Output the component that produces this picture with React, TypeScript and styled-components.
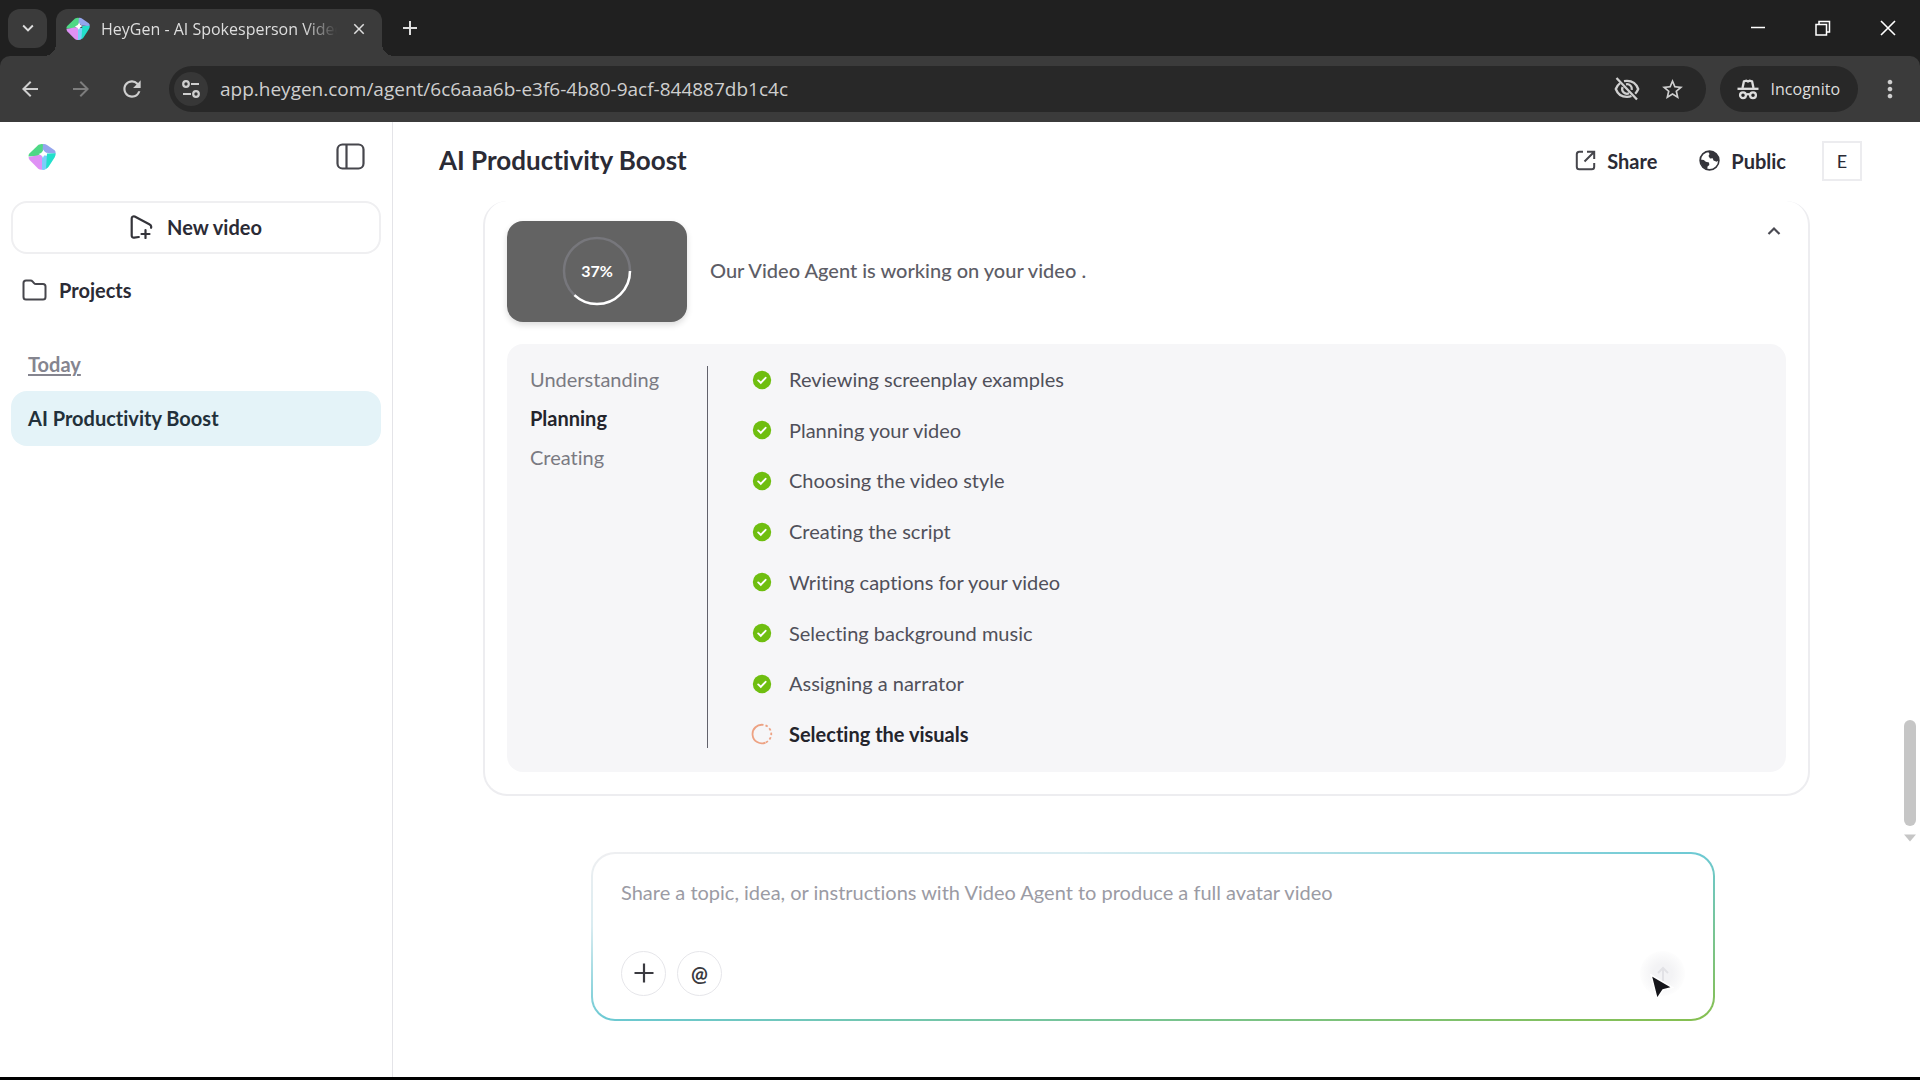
import React from 'react';
import styled, { createGlobalStyle } from 'styled-components';
import {
  MdArrowBack,
  MdArrowForward,
  MdRefresh,
  MdStarBorder,
  MdMoreVert,
  MdKeyboardArrowDown,
  MdClose,
  MdAdd,
} from 'react-icons/md';

const GlobalStyle = createGlobalStyle`
  * { box-sizing: border-box; }
  body {
    margin: 0;
    background: #000;
    font-family: Lato, "Open Sans", sans-serif;
    font-size: 20px;
    line-height: 28px;
    color: #2b2b35;
    font-variant-ligatures: none;
  }
  button, input, textarea { font: inherit; color: inherit; font-variant-ligatures: none; }
  button { border: 0; background: none; padding: 0; }
  h1, h2, p, ul, ol { margin: 0; padding: 0; list-style: none; }
  svg { display: block; flex: none; }
`;

const Window = styled.div`
  height: 100vh;
  display: flex;
  flex-direction: column;
  border-bottom: 3px solid #000;
  background: #fff;
`;

/* ---------- browser frame ---------- */

const TabStrip = styled.div`
  display: flex;
  align-items: center;
  height: 56px;
  flex: none;
  padding-left: 8px;
  background: #202020;
  color: #dedede;
  font-family: "Open Sans", sans-serif;
  font-size: 16px;
`;

const TabSearch = styled.button`
  width: 39px;
  height: 39px;
  display: grid;
  place-items: center;
  border-radius: 12px;
  background: #3b3b3b;
`;

const Tab = styled.div`
  position: relative;
  align-self: flex-end;
  display: flex;
  align-items: center;
  width: 326px;
  height: 47px;
  margin-left: 9px;
  padding: 0 14px 8px 10px;
  border-radius: 12px 12px 0 0;
  background: #3b3b3b;

  &::before,
  &::after {
    content: '';
    position: absolute;
    bottom: 0;
    width: 12px;
    height: 12px;
  }
  &::before {
    right: 100%;
    background: radial-gradient(circle at 0 0, transparent 12px, #3b3b3b 12px);
  }
  &::after {
    left: 100%;
    background: radial-gradient(circle at 100% 0, transparent 12px, #3b3b3b 12px);
  }
`;

const TabTitle = styled.span`
  flex: 1;
  margin: 0 13px 0 11px;
  overflow: hidden;
  white-space: nowrap;
  mask-image: linear-gradient(to right, #000 86%, transparent);
`;

const IconButton = styled.button<{ $size?: number }>`
  width: ${(p) => p.$size ?? 40}px;
  height: ${(p) => p.$size ?? 40}px;
  flex: none;
  display: grid;
  place-items: center;
`;

const NewTab = styled(IconButton)`
  margin-left: 8px;
`;

const WindowControls = styled.div`
  display: flex;
  gap: 25px;
  margin-left: auto;
  padding-right: 12px;
`;

const ToolbarBack = styled.div`
  flex: none;
  background: #202020;
`;

const Toolbar = styled.div`
  display: flex;
  align-items: center;
  height: 66px;
  padding: 0 10px;
  background: #3b3b3b;
  border-radius: 10px 10px 0 0;
  color: #cfcfcf;
  font-family: "Open Sans", sans-serif;
`;

const NavButtons = styled.div`
  display: flex;
  gap: 11px;
`;

const NavButton = styled(IconButton)<{ $dim?: boolean }>`
  color: ${(p) => (p.$dim ? '#7d7d7d' : '#cfcfcf')};
`;

const Omnibox = styled.div`
  flex: 1;
  display: flex;
  align-items: center;
  height: 46px;
  margin: 0 14px 0 17px;
  padding: 0 13px 0 5px;
  border-radius: 23px;
  background: #282828;
`;

const SiteInfo = styled(IconButton)`
  border-radius: 50%;
  background: #373737;
`;

const Address = styled.input`
  flex: 1;
  min-width: 0;
  height: 32px;
  margin-left: 12px;
  padding: 0;
  border: 0;
  outline: 0;
  background: none;
  font-size: 19px;
`;

const OmniboxActions = styled.div`
  display: flex;
  gap: 6px;
`;

const IncognitoChip = styled.div`
  display: flex;
  align-items: center;
  gap: 12px;
  height: 46px;
  padding: 0 18px 0 17px;
  border-radius: 23px;
  background: #282828;
  color: #dedede;
  font-size: 16px;
`;

const MenuButton = styled(IconButton)`
  margin-left: 12px;
`;

/* ---------- application ---------- */

const AppArea = styled.div`
  flex: 1;
  min-height: 0;
  display: flex;
`;

const Sidebar = styled.aside`
  width: 393px;
  flex: none;
  padding: 0 11px;
  border-right: 1px solid #e4e4e8;
`;

const SidebarTop = styled.div`
  display: flex;
  align-items: center;
  justify-content: space-between;
  height: 79px;
  padding: 0 16px 10px 17px;
`;

const NewVideo = styled.button`
  display: flex;
  align-items: center;
  justify-content: center;
  gap: 14px;
  width: 100%;
  height: 53px;
  padding-bottom: 2px;
  border: 2px solid #efeff1;
  border-radius: 16px;
  font-weight: 700;
`;

const NavLink = styled.a`
  display: flex;
  align-items: center;
  gap: 12px;
  height: 44px;
  margin-top: 14px;
  padding-left: 11px;
  color: inherit;
  font-weight: 700;
  text-decoration: none;
`;

const GroupLabel = styled.h2`
  margin: 38px 0 13px;
  padding-left: 17px;
  color: #85858f;
  font-size: 20px;
  font-weight: 700;
  text-decoration: underline;
  text-decoration-thickness: 2px;
  text-underline-offset: 2px;
`;

const SessionLink = styled.a`
  display: flex;
  align-items: center;
  height: 55px;
  padding: 0 17px 2px;
  border-radius: 16px;
  background: #e4f3f8;
  color: #22303a;
  font-weight: 700;
  text-decoration: none;
`;

const Main = styled.main`
  flex: 1;
  min-width: 0;
  display: flex;
  flex-direction: column;
`;

const Header = styled.header`
  display: flex;
  align-items: center;
  height: 79px;
  flex: none;
  padding: 0 58px 2px 46px;
`;

const Title = styled.h1`
  flex: 1;
  font-size: 26px;
  font-weight: 700;
  line-height: 34px;
  padding-bottom: 2px;
`;

const HeaderButton = styled.button`
  display: flex;
  align-items: center;
  gap: 11px;
  margin-right: 42px;
  font-weight: 700;
`;

const Avatar = styled.button`
  width: 40px;
  height: 40px;
  margin-left: -6px;
  border: 2px solid #ececef;
  font-size: 18px;
`;

const ScrollArea = styled.div`
  flex: 1;
  min-height: 0;
  display: flex;
  overflow: hidden;
`;

const Thread = styled.div`
  flex: 1;
  padding: 0 90px;
`;

const ScrollTrack = styled.div`
  display: flex;
  flex-direction: column;
  justify-content: flex-end;
  align-items: center;
  gap: 8px;
  width: 12px;
  margin: 0 4px;
  padding-bottom: 4px;
`;

const ScrollThumb = styled.div`
  width: 12px;
  height: 106px;
  border-radius: 6px;
  background: #c6c6c6;
`;

const ProgressCard = styled.section`
  padding: 20px 22px 22px;
  border: 2px solid #ededf0;
  border-top: 0;
  border-radius: 24px;
`;

const CardTop = styled.div`
  display: flex;
  gap: 23px;
`;

const Thumbnail = styled.div`
  display: grid;
  place-items: center;
  width: 180px;
  height: 101px;
  padding-bottom: 2px;
  border-radius: 16px;
  background: #636363;
  box-shadow: 0 3px 6px rgba(0, 0, 0, 0.14);
  color: #fff;
  font-size: 16px;
  font-weight: 700;

  > * {
    grid-area: 1 / 1;
  }
`;

const Status = styled.p`
  flex: 1;
  align-self: center;
  padding-bottom: 4px;
  color: #5d5d66;
  font-weight: 500;
`;

const CollapseButton = styled(IconButton)`
  margin-top: -2px;
  color: #4a4a52;
`;

const Panel = styled.div`
  display: flex;
  min-height: 428px;
  margin-top: 22px;
  padding: 22px 23px 24px;
  border-radius: 16px;
  background: #f6f6f8;
  line-height: 27px;
`;

const Phases = styled.ol`
  display: flex;
  flex-direction: column;
  gap: 12px;
  width: 178px;
  border-right: 1px solid #62626c;
`;

const Phase = styled.li<{ $current?: boolean }>`
  color: ${(p) => (p.$current ? '#24242c' : '#7a7a82')};
  font-weight: ${(p) => (p.$current ? 700 : 400)};
`;

const Tasks = styled.ul`
  display: flex;
  flex-direction: column;
  justify-content: space-between;
  padding-left: 43px;
`;

const Task = styled.li<{ $current?: boolean }>`
  display: flex;
  align-items: center;
  gap: 16px;
  color: ${(p) => (p.$current ? '#24242c' : '#50505a')};
  font-weight: ${(p) => (p.$current ? 700 : 400)};
`;

const Footer = styled.footer`
  flex: none;
  padding: 6px 205px 56px 198px;
`;

const Composer = styled.form`
  display: flex;
  flex-direction: column;
  padding: 24px 28px 23px;
  border: 2px solid transparent;
  border-radius: 24px;
  background:
    linear-gradient(#fff, #fff) padding-box,
    linear-gradient(to bottom right, #efeff1 0%, #d9ecf1 22%, #6cc9d3 50%, #86bf4e 100%) border-box;
`;

const Prompt = styled.textarea`
  width: 100%;
  height: 73px;
  padding: 0;
  border: 0;
  outline: 0;
  resize: none;
  background: none;

  &::placeholder {
    color: #9b9ba4;
    opacity: 1;
  }
`;

const ComposerActions = styled.div`
  display: flex;
  gap: 11px;
`;

const RoundButton = styled.button`
  display: grid;
  place-items: center;
  width: 45px;
  height: 45px;
  padding-bottom: 1px;
  border: 1px solid #e6e6ea;
  border-radius: 50%;
  color: #3a3a40;
  font-weight: 700;
`;

const SendButton = styled.button`
  position: relative;
  display: grid;
  place-items: center;
  width: 45px;
  height: 45px;
  margin-left: auto;
  border-radius: 50%;
  background: radial-gradient(circle, #f3f3f5 30%, #fdfdfd 70%);
`;

const Pointer = styled.svg`
  position: absolute;
  left: 9px;
  top: 22px;
`;

/* ---------- drawings ---------- */

const Logo = ({ size }: { size: number }) => (
  <svg width={size} height={size} viewBox="0 0 28 28" aria-hidden="true">
    <path d="M10.5 1.8 Q14 .2 16.5 1.6 L14.5 9.6 L9.5 13 L.6 13.6 Q.2 12 1.4 10.6 Z" fill="#4fd886" />
    <path d="M15 1 Q17.5 .8 19 2 L26.6 7.2 Q28 8.4 27.6 10.8 L18.2 9.8 L14.6 7 Z" fill="#94a5ee" />
    <path d="M.6 14 L14 11.5 L14 26.8 Q11.8 27 10 25.4 L1.6 17 Q.5 15.6 .6 14 Z" fill="#df91f5" />
    <path d="M14 12 L20.5 13 L18.5 25.4 Q16.4 27.4 14 26.8 Z" fill="#7ccdfa" />
    <path d="M19 10.4 L27.6 10.2 Q28 12.4 26.6 14.4 L20.4 24 Q19.6 25.2 18 25.8 Z" fill="#23dfcb" />
    <path d="M15.4 6.4 Q16 9.8 19.4 10.6 Q16 11.4 15 15 Q14 11.8 10.4 11 Q14.400 10 15.4 6.4Z" fill="#fff" />
  </svg>
);

const TuneIcon = () => (
  <svg width="20" height="20" viewBox="0 0 20 20" fill="none" stroke="currentColor" strokeWidth="2.2">
    <circle cx="5" cy="5" r="2.8" />
    <path d="M10 5h8M2 15h8" />
    <circle cx="15" cy="15" r="2.8" />
  </svg>
);

const EyeOffIcon = () => (
  <svg width="28" height="28" viewBox="0 0 28 28" fill="none" stroke="currentColor" strokeWidth="2.3">
    <path d="M11 6.2c1-.2 2-.3 3-.3 5.2 0 9.4 3 11.2 8.1-.7 1.8-1.7 3.4-3 4.7M18.5 21c-1.4.6-2.9.9-4.5.9-5.2 0-9.4-3-11.2-7.9C3.7 11.5 5.2 9.5 7.100 8.100" />
    <path d="M13 9.3a4.8 4.8 0 0 1 5.8 5.6M16 18.3a4.8 4.8 0 0 1-6.4-6.3M3.5 3l20.5 21.5" />
  </svg>
);

const IncognitoIcon = () => (
  <svg width="22" height="21" viewBox="0 0 22 21" fill="none" stroke="currentColor" strokeWidth="2.3">
    <path d="M5.500 9L6.900 2.400 9.300 1.700l1.700.8 1.700-.8 2.400.7 1.400 6.600" />
    <path d="M.5 9.800h21" />
    <circle cx="6" cy="16.200" r="2.900" />
    <circle cx="16" cy="16.200" r="2.900" />
    <path d="M8.700 15.800q2.300-1.200 4.600 0" />
  </svg>
);

const MinimizeIcon = () => (
  <svg width="16" height="16" viewBox="0 0 16 16" stroke="#fff" strokeWidth="1.5">
    <path d="M1 7.5h14" />
  </svg>
);

const RestoreIcon = () => (
  <svg width="16" height="16" viewBox="0 0 16 16" fill="none" stroke="#fff" strokeWidth="1.5">
    <path d="M1 4.5h10.500V15H1zM4 4.500V1.500h10.500V12h-3" />
  </svg>
);

const CloseIcon = () => (
  <svg width="16" height="16" viewBox="0 0 16 16" stroke="#fff" strokeWidth="1.6">
    <path d="M1 1l14 14M15 1L1 15" />
  </svg>
);

const SidebarIcon = () => (
  <svg width="29" height="27" viewBox="0 0 29 27" fill="none" stroke="#46464c" strokeWidth="2.2">
    <rect x="1.5" y="1.5" width="26" height="24" rx="5" />
    <path d="M10.5 1.5v24" />
  </svg>
);

const NewVideoIcon = () => (
  <svg width="23" height="24" viewBox="0 0 23 24" fill="none" stroke="#34343a" strokeWidth="2.2" strokeLinecap="round" strokeLinejoin="round">
    <path d="M8.8 22 4.200 22.600C2.600 22.900 1.700 22 1.700 20.600V3.400c0-1.600 1.600-2.500 3-1.800l14.600 7.600c1.600.9 2.200 2.200 1.800 3.600" />
    <path d="M15.500 15v8M11.500 19h8" />
  </svg>
);

const FolderIcon = () => (
  <svg width="25" height="22" viewBox="0 0 25 22" fill="none" stroke="#46464c" strokeWidth="2" strokeLinejoin="round">
    <path d="M1.500 4c0-1.500 1-2.500 2.500-2.500h4.500c1 0 1.600.4 2.200 1.100l1.300 1.500c.5.600 1 .9 1.900.9H21c1.500 0 2.500 1 2.500 2.500V18c0 1.500-1 2.500-2.500 2.500H4c-1.500 0-2.500-1-2.500-2.500z" />
  </svg>
);

const ShareIcon = () => (
  <svg width="21" height="21" viewBox="0 0 21 21" fill="none" stroke="#46464c" strokeWidth="2">
    <path d="M8 1.800H4.300c-1.500 0-2.500 1-2.500 2.500v12.400c0 1.500 1 2.500 2.500 2.500h12.400c1.500 0 2.500-1 2.500-2.500V13" />
    <path d="M12 1.800h7.200V9M19 2L9.500 11.500" />
  </svg>
);

const GlobeIcon = () => (
  <svg width="21" height="21" viewBox="0 0 21 21" aria-hidden="true">
    <circle cx="10.5" cy="10.5" r="9.4" fill="#fff" stroke="#34343a" strokeWidth="1.6" />
    <path d="M9 1.600C12 1 15 1.600 17.500 4.500c1.600 1.900 2.100 4 2 6l-1.800 1.300-3.200-1.300-.8-2.300-2.700.2L9.500 6 10.500 4z" fill="#34343a" />
    <path d="M1.300 9.500l3.500.4 2 1.800 3.200.8.300 2.400-1.800 1.500-.2 2.800C4.500 18.300 1.300 14.600 1.300 9.500z" fill="#34343a" />
  </svg>
);

const ChevronUp = () => (
  <svg width="14" height="10" viewBox="0 0 14 10" fill="none" stroke="currentColor" strokeWidth="2.2">
    <path d="M1.500 8L7 2.500 12.500 8" />
  </svg>
);

const PlusIcon = () => (
  <svg width="20" height="20" viewBox="0 0 20 20" stroke="currentColor" strokeWidth="2.2">
    <path d="M10 .5v19M.5 10h19" />
  </svg>
);

const ProgressRing = ({ value }: { value: number }) => (
  <svg width="70" height="70" viewBox="0 0 70 70" fill="none" aria-hidden="true">
    <circle cx="35" cy="35" r="33" stroke="#77777c" strokeWidth="2.5" />
    <circle cx="35" cy="35" r="33" stroke="#fff" strokeWidth="2.5" pathLength={100} strokeDasharray={`${value} 100`} />
  </svg>
);

const DoneIcon = () => (
  <svg width="22" height="22" viewBox="0 0 22 22" fill="none">
    <circle cx="11" cy="11" r="9.2" fill="#6fbe10" />
    <path d="M7.200 11.400l2.600 2.400 4.800-5" stroke="#fff" strokeWidth="1.9" strokeLinecap="round" />
  </svg>
);

const BusyIcon = () => (
  <svg width="22" height="22" viewBox="0 0 22 22" fill="none" stroke="#eda283" strokeWidth="1.8">
    <path d="M14.500 19.600A9.300 9.300 0 1 1 12.500 1.900" />
    <path d="M14.500 2.400A9.300 9.300 0 0 1 14.500 19.600" strokeDasharray="2.500 2.200" />
  </svg>
);

/* ---------- data ---------- */

const phases = ['Understanding', 'Planning', 'Creating'];

const tasks = [
  'Reviewing screenplay examples',
  'Planning your video',
  'Choosing the video style',
  'Creating the script',
  'Writing captions for your video',
  'Selecting background music',
  'Assigning a narrator',
  'Selecting the visuals',
];

const progress = 37;

function BrowserFrame() {
  return (
    <>
      <TabStrip>
        <TabSearch aria-label="Search tabs">
          <MdKeyboardArrowDown size={22} />
        </TabSearch>
        <Tab>
          <Logo size={24} />
          <TabTitle>HeyGen - AI Spokesperson Video</TabTitle>
          <IconButton $size={18} aria-label="Close tab">
            <MdClose size={18} />
          </IconButton>
        </Tab>
        <NewTab aria-label="New tab">
          <MdAdd size={24} />
        </NewTab>
        <WindowControls>
          <IconButton aria-label="Minimize"><MinimizeIcon /></IconButton>
          <IconButton aria-label="Restore"><RestoreIcon /></IconButton>
          <IconButton aria-label="Close window"><CloseIcon /></IconButton>
        </WindowControls>
      </TabStrip>
      <ToolbarBack>
        <Toolbar>
          <NavButtons>
            <NavButton aria-label="Back"><MdArrowBack size={24} /></NavButton>
            <NavButton $dim aria-label="Forward"><MdArrowForward size={24} /></NavButton>
            <NavButton aria-label="Reload"><MdRefresh size={26} /></NavButton>
          </NavButtons>
          <Omnibox>
            <SiteInfo $size={34} aria-label="View site information"><TuneIcon /></SiteInfo>
            <Address
              aria-label="Address"
              readOnly
              value="app.heygen.com/agent/6c6aaa6b-e3f6-4b80-9acf-844887db1c4c"
            />
            <OmniboxActions>
              <IconButton aria-label="Tracking protection"><EyeOffIcon /></IconButton>
              <IconButton aria-label="Bookmark this tab"><MdStarBorder size={25} /></IconButton>
            </OmniboxActions>
          </Omnibox>
          <IncognitoChip>
            <IncognitoIcon />
            Incognito
          </IncognitoChip>
          <MenuButton aria-label="Browser menu"><MdMoreVert size={28} /></MenuButton>
        </Toolbar>
      </ToolbarBack>
    </>
  );
}

function SideNav() {
  return (
    <Sidebar>
      <SidebarTop>
        <Logo size={28} />
        <IconButton $size={29} aria-label="Collapse sidebar"><SidebarIcon /></IconButton>
      </SidebarTop>
      <NewVideo>
        <NewVideoIcon />
        New video
      </NewVideo>
      <NavLink href="#projects">
        <FolderIcon />
        Projects
      </NavLink>
      <GroupLabel>Today</GroupLabel>
      <SessionLink href="#session">AI Productivity Boost</SessionLink>
    </Sidebar>
  );
}

function VideoProgress() {
  return (
    <ProgressCard>
      <CardTop>
        <Thumbnail>
          <ProgressRing value={progress} />
          <span>{progress}%</span>
        </Thumbnail>
        <Status>Our Video Agent is working on your video .</Status>
        <CollapseButton $size={24} aria-label="Collapse"><ChevronUp /></CollapseButton>
      </CardTop>
      <Panel>
        <Phases>
          {phases.map((name) => (
            <Phase key={name} $current={name === 'Planning'}>{name}</Phase>
          ))}
        </Phases>
        <Tasks>
          {tasks.map((name, i) => {
            const current = i === tasks.length - 1;
            return (
              <Task key={name} $current={current}>
                {current ? <BusyIcon /> : <DoneIcon />}
                {name}
              </Task>
            );
          })}
        </Tasks>
      </Panel>
    </ProgressCard>
  );
}

export default function App() {
  return (
    <Window>
      <GlobalStyle />
      <BrowserFrame />
      <AppArea>
        <SideNav />
        <Main>
          <Header>
            <Title>AI Productivity Boost</Title>
            <HeaderButton><ShareIcon />Share</HeaderButton>
            <HeaderButton><GlobeIcon />Public</HeaderButton>
            <Avatar aria-label="Account">E</Avatar>
          </Header>
          <ScrollArea>
            <Thread>
              <VideoProgress />
            </Thread>
            <ScrollTrack>
              <ScrollThumb />
              <svg width="12" height="8" viewBox="0 0 12 8" aria-hidden="true">
                <path d="M0 .5h12L6 7.500z" fill="#c6c6c6" />
              </svg>
            </ScrollTrack>
          </ScrollArea>
          <Footer>
            <Composer>
              <Prompt
                aria-label="Message"
                placeholder="Share a topic, idea, or instructions with Video Agent to produce a full avatar video"
              />
              <ComposerActions>
                <RoundButton type="button" aria-label="Add"><PlusIcon /></RoundButton>
                <RoundButton type="button" aria-label="Mention">@</RoundButton>
                <SendButton type="button" aria-label="Send">
                  <svg width="16" height="16" viewBox="0 0 16 16" fill="none" stroke="#e2e2e6" strokeWidth="2">
                    <path d="M8 15V2M3 7l5-5 5 5" />
                  </svg>
                  <Pointer width="26" height="30" viewBox="0 0 26 30" aria-hidden="true">
                    <path d="M2 2l21.500 12.500-9.500 2.500-6 9z" fill="#15151a" stroke="#fff" strokeWidth="1.5" />
                  </Pointer>
                </SendButton>
              </ComposerActions>
            </Composer>
          </Footer>
        </Main>
      </AppArea>
    </Window>
  );
}
